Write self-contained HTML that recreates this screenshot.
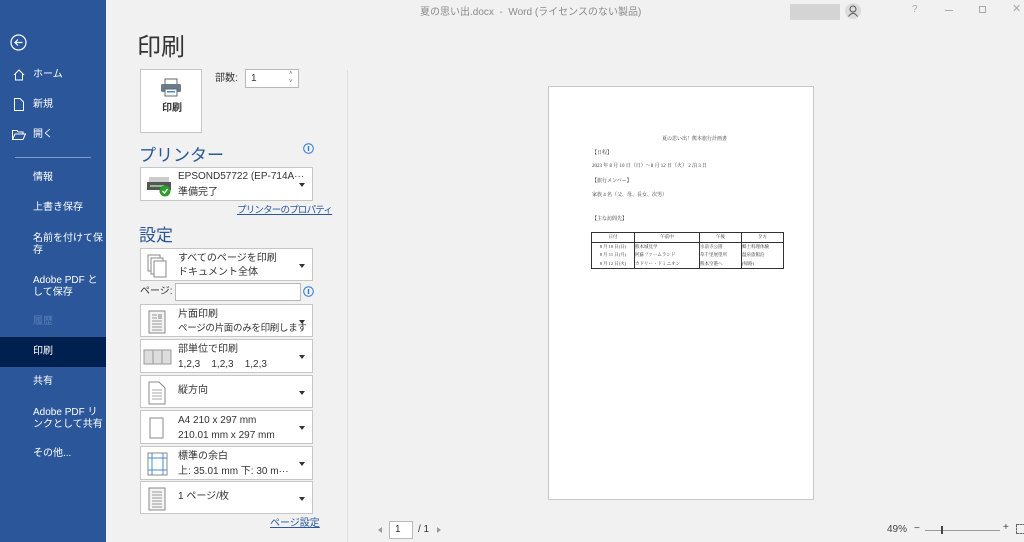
<!DOCTYPE html>
<html><head><meta charset="utf-8"><style>
*{margin:0;padding:0;box-sizing:border-box}
body{width:1024px;height:542px;overflow:hidden;background:#f1f1f1;font-family:"Liberation Sans","Noto Sans CJK JP",sans-serif;position:relative;color:#333;line-height:12px}
.a{position:absolute;white-space:nowrap}
#side{left:0;top:0;width:106px;height:542px;background:#2b579a;color:#fff;font-size:10px}
#side .t{position:absolute;left:33px;line-height:12px}
.box{position:absolute;left:140px;width:173px;background:#fff;border:1px solid #c6c6c6;font-size:10px;color:#333;white-space:nowrap}
.box .l1{position:absolute;left:37px;top:4px;line-height:12px}
.box .l2{position:absolute;left:37px;top:18px;line-height:12px}
.box .ar{position:absolute;right:7px;top:15px;width:0;height:0;border-left:3px solid transparent;border-right:3px solid transparent;border-top:4px solid #333}
.ic{position:absolute;left:6px;top:5px}
</style></head><body>
<div class="a" style="left:420px;top:7px;font-size:10px;color:#8a8a8a">夏の思い出.docx&nbsp; -&nbsp; Word (ライセンスのない製品)</div>
<div class="a" style="left:790px;top:4px;width:50px;height:16px;background:#d4d4d4"></div>
<svg class="a" style="left:845px;top:3px" width="16" height="16"><circle cx="8" cy="8" r="8" fill="#dcdcdc"/><circle cx="8" cy="6" r="3" fill="none" stroke="#555"/><path d="M3.5 13.5Q8 7 12.5 13.5" fill="none" stroke="#555"/></svg>
<div class="a" style="left:912px;top:4px;font-size:10px;color:#aaa">?</div>
<div class="a" style="left:945px;top:10px;width:8px;height:1px;background:#aaa"></div>
<div class="a" style="left:979px;top:6px;width:7px;height:7px;border:1px solid #aaa"></div>
<div class="a" style="left:1012px;top:3px;font-size:11px;color:#aaa">✕</div>

<div id="side" class="a">
<svg class="a" style="left:10px;top:34px" width="17" height="17"><circle cx="8.5" cy="8.5" r="7.5" fill="none" stroke="#fff" stroke-width="1.2"/><path d="M12.5 8.5H5M8 5.5L5 8.5 8 11.5" fill="none" stroke="#fff" stroke-width="1.2"/></svg>
<svg class="a" style="left:13px;top:69px" width="12" height="12"><path d="M1 6L6 1 11 6M2.5 5V11H9.5V5" fill="none" stroke="#fff"/></svg>
<div class="t" style="top:69px">ホーム</div>
<svg class="a" style="left:14px;top:98px" width="10" height="13"><path d="M.5.5H6L9.5 4V12.5H.5Z" fill="none" stroke="#fff"/></svg>
<div class="t" style="top:99px">新規</div>
<svg class="a" style="left:12px;top:130px" width="14" height="10"><path d="M.5 9.5V.5H5L6 2H11V4M.5 9.5L3 4H13.5L11 9.5Z" fill="none" stroke="#fff"/></svg>
<div class="t" style="top:129px">開く</div>
<div class="a" style="left:15px;top:157px;width:76px;height:1px;background:#7f9cc7"></div>
<div class="t" style="top:172px">情報</div>
<div class="t" style="top:202px">上書き保存</div>
<div class="t" style="top:233px">名前を付けて保<br>存</div>
<div class="t" style="top:275px">Adobe PDF と<br>して保存</div>
<div class="t" style="top:316px;color:#5b7fb5">履歴</div>
<div class="a" style="left:0;top:337px;width:106px;height:30px;background:#002050"></div>
<div class="t" style="top:346px">印刷</div>
<div class="t" style="top:376px">共有</div>
<div class="t" style="top:407px">Adobe PDF リ<br>ンクとして共有</div>
<div class="t" style="top:448px">その他...</div>
</div>

<div class="a" style="left:137px;top:34px;font-size:24px;line-height:28px;color:#333">印刷</div>
<div class="a" style="left:140px;top:69px;width:62px;height:64px;background:#fff;border:1px solid #c6c6c6"></div>
<svg class="a" style="left:160px;top:78px" width="22" height="20"><rect x="5" y="1" width="12" height="6" fill="#fff" stroke="#666"/><rect x="1" y="6" width="20" height="8" rx="1.5" fill="#6b7b8c"/><rect x="5" y="11" width="12" height="7" fill="#fff" stroke="#666"/><rect x="7" y="13" width="8" height="1.5" fill="#3a8de0"/></svg>
<div class="a" style="left:162px;top:103px;font-size:10px;font-weight:bold;color:#333">印刷</div>
<div class="a" style="left:215px;top:73px;font-size:10px">部数:</div>
<div class="a" style="left:245px;top:69px;width:54px;height:19px;background:#fff;border:1px solid #b8b8b8;font-size:10px;padding:3px 5px">1</div>
<div class="a" style="left:289px;top:70px;font-size:6px;color:#666;line-height:8px">˄<br>˅</div>

<div class="a" style="left:139px;top:146px;font-size:17px;line-height:20px;color:#2b579a">プリンター</div>
<svg class="a" style="left:303px;top:143px" width="11" height="11"><circle cx="5.5" cy="5.5" r="4.8" fill="none" stroke="#2b7cd3"/><rect x="4.8" y="3" width="1.4" height="5" fill="#2b7cd3"/></svg>
<div class="box" style="top:167px;height:34px">
<svg class="ic" style="top:6px" width="26" height="24"><rect x="2" y="3" width="20" height="5" fill="#ccc"/><rect x="0" y="8" width="24" height="8" fill="#555"/><rect x="3" y="11" width="14" height="2" fill="#8bbf8b"/><circle cx="18" cy="17" r="5.5" fill="#2a9d2a"/><path d="M15.5 17L17.5 19 20.5 15" stroke="#fff" stroke-width="1.4" fill="none"/></svg>
<div class="l1" style="top:3px">EPSOND57722 (EP-714A···</div>
<div class="l2" style="top:19px">準備完了</div><div class="ar"></div></div>
<div class="a" style="left:237px;top:205px;font-size:9.5px;letter-spacing:-0.8px;color:#2b579a;text-decoration:underline">プリンターのプロパティ</div>

<div class="a" style="left:139px;top:226px;font-size:17px;line-height:20px;color:#2b579a">設定</div>
<div class="box" style="top:248px;height:33px"><svg class="ic" width="22" height="24"><rect x="1" y="1" width="12" height="16" fill="#fff" stroke="#888"/><rect x="4" y="4" width="12" height="16" fill="#fff" stroke="#888"/><rect x="7" y="7" width="12" height="16" fill="#fff" stroke="#888"/></svg><div class="l1">すべてのページを印刷</div><div class="l2">ドキュメント全体</div><div class="ar"></div></div>
<div class="a" style="left:140px;top:286px;font-size:10px">ページ:</div>
<div class="a" style="left:175px;top:283px;width:126px;height:18px;background:#fff;border:1px solid #b8b8b8"></div>
<svg class="a" style="left:303px;top:286px" width="11" height="11"><circle cx="5.5" cy="5.5" r="4.8" fill="none" stroke="#2b7cd3"/><rect x="4.8" y="3" width="1.4" height="5" fill="#2b7cd3"/></svg>
<div class="box" style="top:304px;height:33px"><svg class="ic" width="20" height="24"><rect x="2" y="1" width="16" height="22" fill="#f4f4f4" stroke="#888"/><path d="M5 5h5M5 8h5M5 11h10M5 14h10M5 17h10M5 20h10" stroke="#999"/><rect x="11" y="4" width="4" height="5" fill="#bbb"/></svg><div class="l1">片面印刷</div><div class="l2" style="font-size:9.5px;letter-spacing:-0.3px">ページの片面のみを印刷します</div><div class="ar"></div></div>
<div class="box" style="top:339px;height:34px"><svg class="ic" style="left:2px;top:8px" width="30" height="18"><rect x="1" y="2" width="9" height="14" fill="#ddd" stroke="#999"/><rect x="10" y="2" width="9" height="14" fill="#ddd" stroke="#999"/><rect x="19" y="2" width="9" height="14" fill="#ddd" stroke="#999"/></svg><div class="l1">部単位で印刷</div><div class="l2" style="top:19px">1,2,3&nbsp;&nbsp;&nbsp;&nbsp;1,2,3&nbsp;&nbsp;&nbsp;&nbsp;1,2,3</div><div class="ar"></div></div>
<div class="box" style="top:375px;height:33px"><svg class="ic" width="20" height="24"><path d="M2 1H12L18 7V23H2Z" fill="#fff" stroke="#888"/><path d="M5 9h10M5 12h10M5 15h10M5 18h10" stroke="#aaa"/></svg><div class="l1" style="top:9px">縦方向</div><div class="ar"></div></div>
<div class="box" style="top:410px;height:34px"><svg class="ic" style="left:8px" width="16" height="24"><rect x="1" y="2" width="13" height="20" fill="#fff" stroke="#888"/></svg><div class="l1">A4 210 x 297 mm</div><div class="l2" style="top:19px">210.01 mm x 297 mm</div><div class="ar"></div></div>
<div class="box" style="top:446px;height:34px"><svg class="ic" width="22" height="24"><rect x="1" y="1" width="19" height="22" fill="#fff" stroke="#888"/><path d="M1 6h19M1 18h19M5 1v22M16 1v22" stroke="#4a8ad4"/></svg><div class="l1">標準の余白</div><div class="l2" style="top:19px">上: 35.01 mm 下: 30 m···</div><div class="ar"></div></div>
<div class="box" style="top:481px;height:33px"><svg class="ic" width="20" height="24"><rect x="2" y="1" width="16" height="22" fill="#f4f4f4" stroke="#888"/><path d="M5 5h10M5 8h10M5 11h10M5 14h10M5 17h10M5 20h10" stroke="#999"/></svg><div class="l1" style="top:9px">1 ページ/枚</div><div class="ar"></div></div>
<div class="a" style="left:270px;top:518px;font-size:10px;color:#2b579a;text-decoration:underline">ページ設定</div>

<div class="a" style="left:347px;top:70px;width:1px;height:472px;background:#dcdcdc"></div>

<div class="a" style="left:548px;top:86px;width:266px;height:414px;background:#fff;border:1px solid #c8c8c8;font-family:'Liberation Serif','Noto Serif CJK SC',serif;font-size:5px;line-height:6px;color:#333">
<div class="a" style="left:113px;top:50px">夏の思い出！熊本旅行計画書</div>
<div class="a" style="left:43px;top:64px">【日程】</div>
<div class="a" style="left:43px;top:77px">2023 年 8 月 10 日（日）～8 月 12 日（火） 2 泊 3 日</div>
<div class="a" style="left:43px;top:92px">【旅行メンバー】</div>
<div class="a" style="left:43px;top:106px">家族 4 名（父、母、長女、次男）</div>
<div class="a" style="left:43px;top:130px">【主な訪問先】</div>
<table class="a" style="left:42px;top:145px;width:193px;border-collapse:collapse;font-size:4.5px;line-height:8.5px;white-space:nowrap">
<tr><td style="border:1px solid #333;text-align:center;width:43px">日付</td><td style="border:1px solid #333;text-align:center;width:65px">午前中</td><td style="border:1px solid #333;text-align:center">午後</td><td style="border:1px solid #333;text-align:center">夕方</td></tr>
<tr><td style="border-left:1px solid #333;border-right:1px solid #333;text-align:center">8 月 10 日(日)</td><td style="border-right:1px solid #333">熊本城見学</td><td style="border-right:1px solid #333">水前寺公園</td><td style="border-right:1px solid #333">郷土料理体験</td></tr>
<tr><td style="border-left:1px solid #333;border-right:1px solid #333;text-align:center">8 月 11 日(月)</td><td style="border-right:1px solid #333">阿蘇ファームランド</td><td style="border-right:1px solid #333">草千里展望所</td><td style="border-right:1px solid #333">温泉旅館泊</td></tr>
<tr><td style="border:1px solid #333;border-top:0;text-align:center">8 月 12 日(火)</td><td style="border:1px solid #333;border-top:0">カドリー・ドミニオン</td><td style="border:1px solid #333;border-top:0">熊本空港へ</td><td style="border:1px solid #333;border-top:0">(帰路)</td></tr>
</table>
</div>

<div class="a" style="left:378px;top:527px;width:0;height:0;border-top:3px solid transparent;border-bottom:3px solid transparent;border-right:4px solid #999"></div>
<div class="a" style="left:389px;top:521px;width:24px;height:18px;background:#fff;border:1px solid #b8b8b8;font-size:10px;padding:2px 5px">1</div>
<div class="a" style="left:418px;top:524px;font-size:10px">/ 1</div>
<div class="a" style="left:437px;top:527px;width:0;height:0;border-top:3px solid transparent;border-bottom:3px solid transparent;border-left:4px solid #999"></div>

<div class="a" style="left:887px;top:524px;font-size:10px;color:#444">49%</div>
<div class="a" style="left:914px;top:523px;font-size:10px;color:#444">−</div>
<div class="a" style="left:925px;top:530px;width:75px;height:1px;background:#999"></div>
<div class="a" style="left:941px;top:526px;width:2px;height:8px;background:#444"></div>
<div class="a" style="left:1003px;top:522px;font-size:10px;color:#444">+</div>
<div class="a" style="left:1016px;top:524px;width:10px;height:10px;border:1px dashed #666"></div>
</body></html>
